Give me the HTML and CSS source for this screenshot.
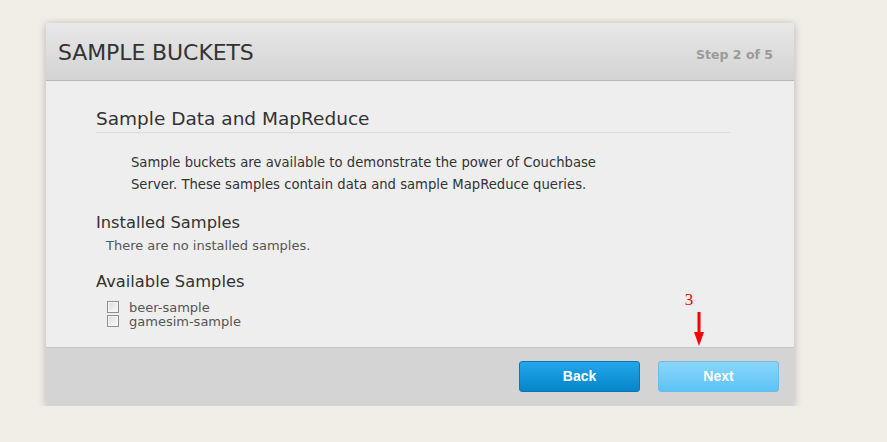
FILE: index.html
```html
<!DOCTYPE html>
<html lang="en">
<head>
    <meta charset="UTF-8" />
    <title>Sample Buckets</title>
    <link rel="stylesheet" href="styles.css">
</head>
<body>

    <!-- Setup wizard dialog -->
    <div class="dialog">
        <div class="dialog-header">
            <h1>SAMPLE BUCKETS</h1>
            <span class="step">Step 2 of 5</span>
        </div>

        <div class="dialog-body">
            <h2 class="section-title">Sample Data and MapReduce</h2>
            <p class="intro">Sample buckets are available to demonstrate the power of Couchbase Server. These samples contain data and sample MapReduce queries.</p>

            <h3>Installed Samples</h3>
            <p class="empty">There are no installed samples.</p>

            <h3>Available Samples</h3>
            <ul class="samples">
                <li><input type="checkbox" id="beer"><label for="beer">beer-sample</label></li>
                <li><input type="checkbox" id="gamesim"><label for="gamesim">gamesim-sample</label></li>
            </ul>
        </div>

        <div class="dialog-footer">
            <button class="btn btn-back">Back</button>
            <button class="btn btn-next">Next</button>
            <!-- annotation -->
            <div class="marker">
                <span>3</span>
                <svg width="12" height="34" viewBox="0 0 12 34">
                    <rect x="4.5" y="0" width="3" height="22" fill="#f00"/>
                    <polygon points="1,20 11,20 6,34" fill="#f00"/>
                </svg>
            </div>
        </div>
    </div>

</body>
</html>
```

FILE: styles.css
```css
* {
    margin: 0;
    padding: 0;
    box-sizing: border-box;
}
body {
    background: #f1eee7;
    font-family: "DejaVu Sans", Verdana, sans-serif;
    color: #333;
    padding: 23px 0 0 46px;
}
.dialog {
    width: 748px;
    background: #eeeeee;
    box-shadow: 0 1px 8px rgba(0, 0, 0, 0.25);
}
.dialog-header {
    height: 58px;
    display: flex;
    justify-content: space-between;
    align-items: center;
    padding: 2px 21px 0 12px;
    background: linear-gradient(#e8e8e8, #d3d3d3);
    border-bottom: 1px solid #b9b9b9;
}
.dialog-header h1 {
    font-size: 22px;
    font-weight: normal;
    color: #333;
    letter-spacing: -0.1px;
}
.step {
    font-size: 12.5px;
    font-weight: bold;
    color: #9a9a9a;
    margin-top: 3px;
}
.dialog-body {
    height: 266px;
    padding: 27px 64px 0 50px;
}
.section-title {
    font-size: 18.5px;
    font-weight: normal;
    padding-bottom: 3px;
    border-bottom: 1px solid #dcdcdc;
}
.intro {
    font-size: 13.2px;
    line-height: 22px;
    margin: 19px 0 0 35px;
    width: 480px;
}
.dialog-body h3 {
    font-size: 16.3px;
    font-weight: normal;
    margin-top: 17px;
}
.empty {
    font-size: 13px;
    color: #555;
    margin: 6px 0 0 10px;
}
.dialog-body .empty + h3 {
    margin-top: 19px;
}
.samples {
    list-style: none;
    margin: 9px 0 0 11px;
}
.samples li {
    display: flex;
    align-items: center;
    height: 14px;
    font-size: 13px;
    color: #555;
}
.samples input {
    appearance: none;
    width: 12px;
    height: 12px;
    margin: 0 10px 0 0;
    border: 1px solid #8f8f8f;
    background: linear-gradient(135deg, #dcdcdc, #fafafa);
    box-shadow: inset 0 0 0 1px #f4f4f4;
}
.dialog-footer {
    position: relative;
    height: 59px;
    display: flex;
    justify-content: flex-end;
    align-items: center;
    gap: 18px;
    padding: 0 15px 2px 0;
    background: #d4d4d4;
    border-top: 1px solid #c6c6c6;
}
.btn {
    width: 121px;
    height: 31px;
    border-radius: 3px;
    font-family: "Liberation Sans", Arial, sans-serif;
    font-size: 14px;
    font-weight: bold;
    color: #fff;
    cursor: pointer;
}
.btn-back {
    background: linear-gradient(#22a6ea, #0785c9);
    border: 1px solid #0a77b5;
}
.btn-next {
    background: linear-gradient(#8ad6fb, #5cc3f6);
    border: 1px solid #6cbbe6;
}
.marker {
    position: absolute;
    left: 647px;
    top: -57px;
    display: flex;
    flex-direction: column;
    align-items: center;
    color: #e00;
    font-family: "Liberation Serif", serif;
    font-size: 17px;
}
.marker span {
    margin-left: -20px;
    line-height: 18px;
    margin-bottom: 3px;
}
```
